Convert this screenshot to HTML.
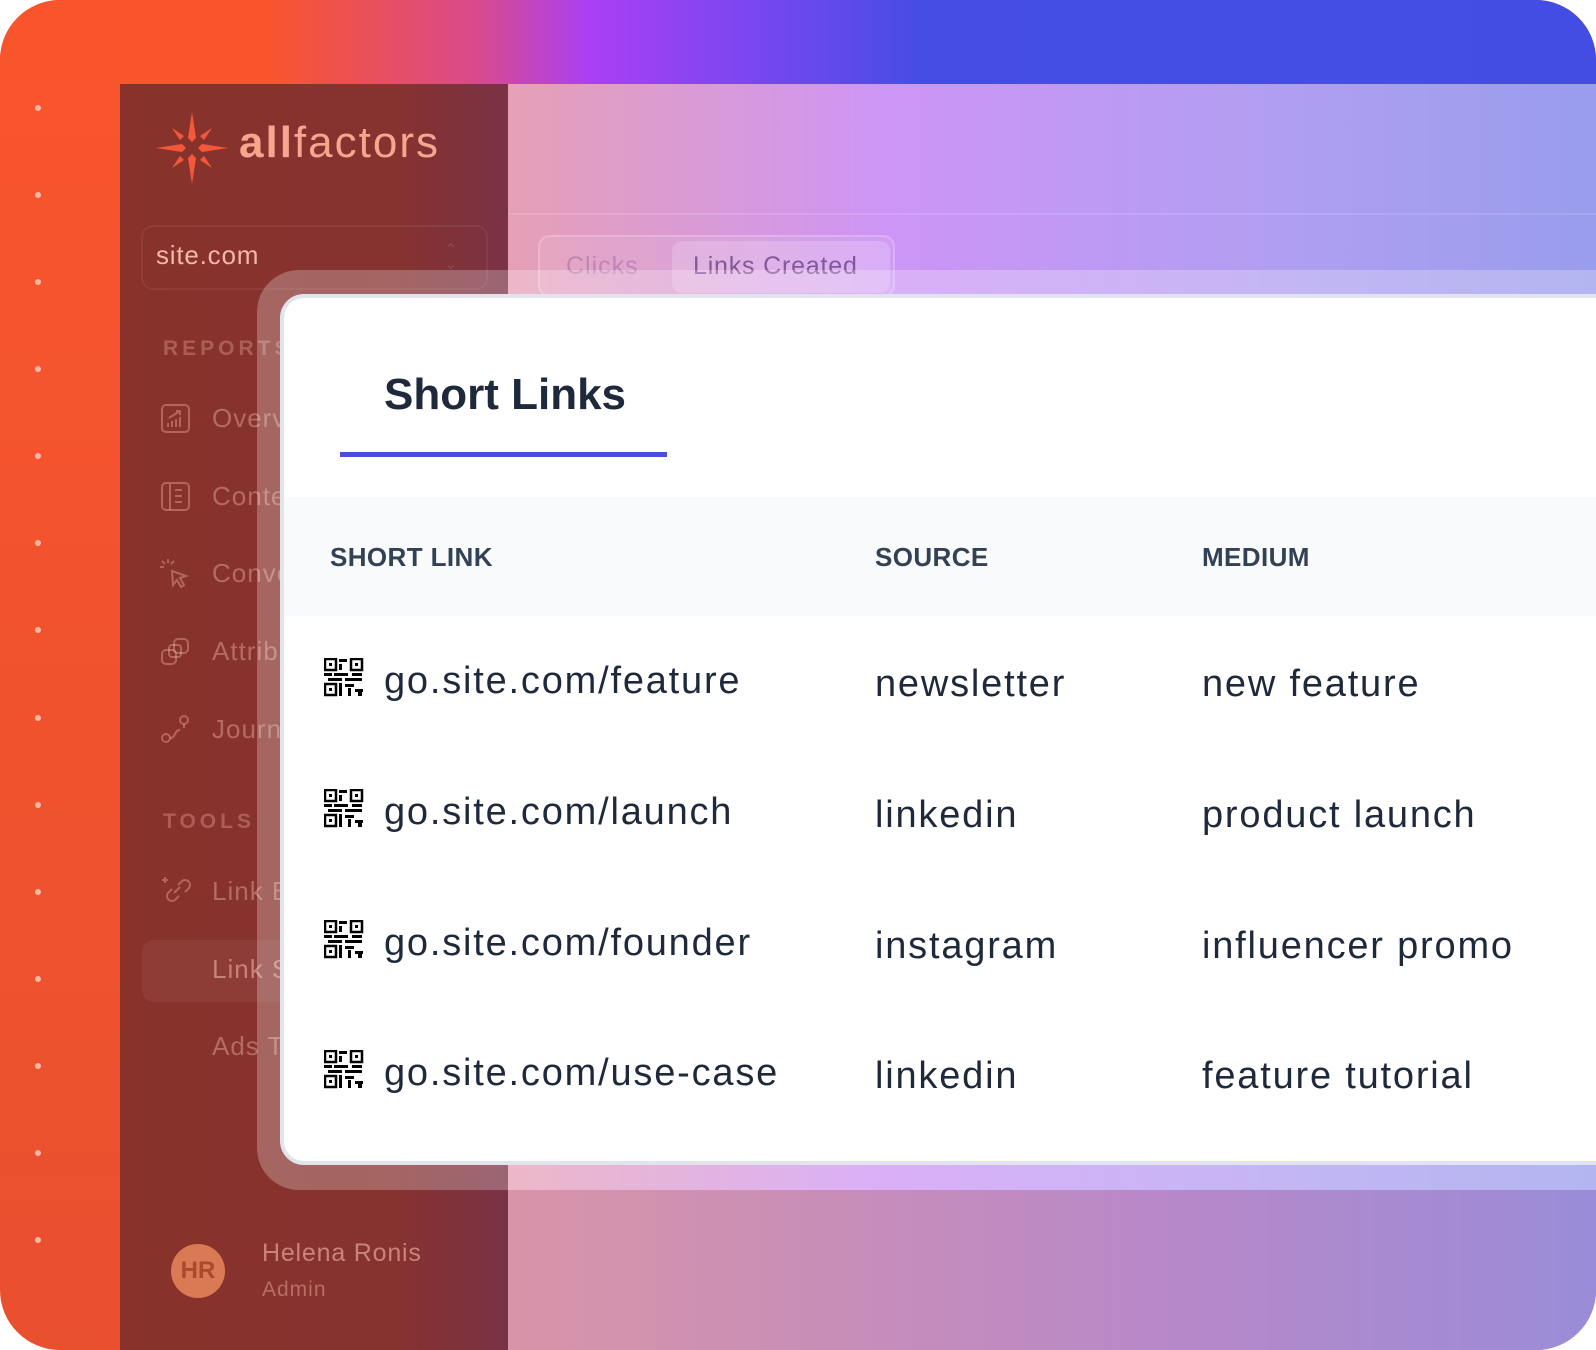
<!DOCTYPE html>
<html><head><meta charset="utf-8"><style>
*{margin:0;padding:0;box-sizing:border-box}
body{width:1596px;height:1350px;overflow:hidden;background:#fff;font-family:"Liberation Sans",sans-serif}
.outer{position:absolute;left:0;top:0;width:1596px;height:1350px;border-radius:60px;overflow:hidden;background:linear-gradient(180deg,#f9552d,#e9502f)}
.top{position:absolute;left:0;top:0;width:1596px;height:84px;background:linear-gradient(90deg,#f9552d 0%,#f9552d 17%,#d84a8e 30%,#aa3ff5 37%,#7a47f0 47%,#454de4 58%,#434de4 100%)}
.dot{position:absolute;left:35px;width:6px;height:6px;border-radius:3px;background:#fbb8a4}
.side{position:absolute;left:120px;top:84px;width:388px;height:1266px;background:linear-gradient(90deg,#88322b 0%,#86322f 70%,#7a3245 100%)}
.main{position:absolute;left:508px;top:84px;width:1088px;height:1266px;background:linear-gradient(90deg,#e6a0b6 0%,#cd95f6 35%,#b19ef2 70%,#999dec 100%)}
.mainbot{position:absolute;left:508px;top:1190px;width:1088px;height:160px;background:linear-gradient(90deg,#d894a8,#b888c8 60%,#9a8cd8)}
.band{position:absolute;left:508px;top:213px;width:1088px;height:2px;background:rgba(255,255,255,.12)}
.sl{position:absolute;color:rgba(255,200,185,.38);font-size:26px;letter-spacing:1px}
.hd{position:absolute;color:rgba(255,200,185,.3);font-size:21px;letter-spacing:4px;font-weight:bold}
.frame{position:absolute;left:257px;top:270px;width:1400px;height:920px;border-radius:42px;background:rgba(255,255,255,.25)}
.card{position:absolute;left:280px;top:294px;width:1400px;height:871px;border-radius:24px;background:#fff;border:4px solid #e2e4ec}
.t{position:absolute;color:#1e293b;font-size:38px;letter-spacing:1.8px}
.th{position:absolute;color:#334155;font-size:26px;font-weight:bold;top:542px;letter-spacing:.4px}
.qr{position:absolute;left:324px;width:40px;height:40px}
</style></head><body>
<div class="outer">
<div class="top"></div>
<div class="dot" style="top:105px"></div><div class="dot" style="top:192px"></div><div class="dot" style="top:279px"></div><div class="dot" style="top:366px"></div><div class="dot" style="top:453px"></div><div class="dot" style="top:540px"></div><div class="dot" style="top:627px"></div><div class="dot" style="top:715px"></div><div class="dot" style="top:802px"></div><div class="dot" style="top:889px"></div><div class="dot" style="top:976px"></div><div class="dot" style="top:1063px"></div><div class="dot" style="top:1150px"></div><div class="dot" style="top:1237px"></div>
<div class="side"></div>
<div class="main"></div>
<div class="mainbot"></div>
<div class="band"></div>
<svg style="position:absolute;left:154px;top:110px" width="76" height="76" viewBox="0 0 76 76"><g fill="#f5573a"><path d="M38 2 L42 28 L38 32 L34 28Z"/><path d="M38 74 L42 48 L38 44 L34 48Z"/><path d="M2 38 L28 34 L32 38 L28 42Z"/><path d="M74 38 L48 34 L44 38 L48 42Z"/><path d="M18 18 L30 26 L26 30Z"/><path d="M58 18 L50 30 L46 26Z"/><path d="M18 58 L26 46 L30 50Z"/><path d="M58 58 L46 50 L50 46Z"/></g></svg>
<div style="position:absolute;left:239px;top:118px;font-size:44px;color:#f6a68e;letter-spacing:2px"><b>all</b>factors</div>
<div style="position:absolute;left:141px;top:225px;width:347px;height:65px;border:2px solid rgba(255,255,255,.06);border-radius:12px"></div>
<div style="position:absolute;left:156px;top:240px;font-size:26px;color:#f5b8a6;letter-spacing:.8px">site.com</div>
<div style="position:absolute;left:444px;top:244px;color:rgba(255,255,255,.12);font-size:16px;line-height:14px">&#8963;<br>&#8964;</div>
<div class="hd" style="left:163px;top:337px">REPORTS</div>
<div class="hd" style="left:163px;top:810px">TOOLS</div>
<svg style="position:absolute;left:160px;top:403px" width="32" height="32" viewBox="0 0 32 32" fill="none" stroke="rgba(255,200,185,.35)" stroke-width="2"><rect x="2" y="2" width="27" height="27" rx="4"/><path d="M8 24v-4M12 24v-6M16 24v-8M20 24v-10M9 15 L20 8 M16 8h4v4"/></svg>
<svg style="position:absolute;left:160px;top:481px" width="32" height="32" viewBox="0 0 32 32" fill="none" stroke="rgba(255,200,185,.35)" stroke-width="2"><rect x="2" y="2" width="27" height="27" rx="4"/><path d="M10 3v26M15 9h7M15 15h7M15 21h7"/></svg>
<svg style="position:absolute;left:158px;top:557px" width="34" height="34" viewBox="0 0 34 34" fill="none" stroke="rgba(255,200,185,.35)" stroke-width="2"><path d="M14 14 L28 19 L22 21 L26 28 L23 30 L19 23 L15 28Z M10 2v4M2 10h4M4 4l3 3M16 4l-3 3"/></svg>
<svg style="position:absolute;left:160px;top:636px" width="32" height="32" viewBox="0 0 32 32" fill="none" stroke="rgba(255,200,185,.35)" stroke-width="2"><rect x="2" y="14" width="14" height="14" rx="4"/><rect x="14" y="3" width="14" height="14" rx="4"/><rect x="9" y="9" width="12" height="12" rx="3"/></svg>
<svg style="position:absolute;left:160px;top:713px" width="32" height="32" viewBox="0 0 32 32" fill="none" stroke="rgba(255,200,185,.35)" stroke-width="2"><circle cx="6" cy="25" r="4"/><circle cx="24" cy="7" r="4"/><path d="M10 25c6 0 4-8 10-8 M24 11v4"/></svg>
<svg style="position:absolute;left:160px;top:875px" width="32" height="32" viewBox="0 0 32 32" fill="none" stroke="rgba(255,200,185,.35)" stroke-width="2"><path d="M14 18 L20 12 M12 14 L8 18a5 5 0 0 0 7 7l4-4 M18 10l4-4a5 5 0 0 1 7 7l-4 4 M5 2v6M2 5h6"/></svg>
<div class="sl" style="left:212px;top:403px">Overview</div>
<div class="sl" style="left:212px;top:481px">Content</div>
<div class="sl" style="left:212px;top:558px">Conversions</div>
<div class="sl" style="left:212px;top:636px">Attribution</div>
<div class="sl" style="left:212px;top:714px">Journeys</div>
<div class="sl" style="left:212px;top:876px">Link Builder</div>
<div style="position:absolute;left:142px;top:940px;width:300px;height:62px;border-radius:12px;background:rgba(255,255,255,.05)"></div>
<div class="sl" style="left:212px;top:954px;color:rgba(255,200,185,.5)">Link Shortener</div>
<div class="sl" style="left:212px;top:1031px">Ads Tracking</div>
<div style="position:absolute;left:171px;top:1244px;width:54px;height:54px;border-radius:27px;background:#d97a55;color:#a94a2f;font-size:24px;font-weight:bold;text-align:center;line-height:54px">HR</div>
<div style="position:absolute;left:262px;top:1239px;font-size:25px;color:rgba(255,200,185,.55);letter-spacing:.8px">Helena Ronis</div>
<div style="position:absolute;left:262px;top:1278px;font-size:21px;color:rgba(255,200,185,.4);letter-spacing:1px">Admin</div>
<div style="position:absolute;left:538px;top:235px;width:357px;height:62px;border:2px solid rgba(255,255,255,.2);border-radius:12px;background:rgba(255,255,255,.08)"></div>
<div style="position:absolute;left:672px;top:241px;width:218px;height:52px;border-radius:10px;background:rgba(255,255,255,.18)"></div>
<div style="position:absolute;left:566px;top:252px;font-size:25px;color:rgba(120,80,140,.35);letter-spacing:1px">Clicks</div>
<div style="position:absolute;left:693px;top:252px;font-size:25px;color:rgba(90,50,120,.7);letter-spacing:.8px">Links Created</div>
<div class="frame"></div>
<div class="card"></div>
<div style="position:absolute;left:384px;top:370px;font-size:44px;font-weight:bold;color:#1e293b">Short Links</div>
<div style="position:absolute;left:340px;top:452px;width:327px;height:5px;background:#4a4fdb"></div>
<div style="position:absolute;left:284px;top:497px;width:1312px;height:119px;background:#f8fafc"></div>
<div class="th" style="left:330px">SHORT LINK</div>
<div class="th" style="left:875px">SOURCE</div>
<div class="th" style="left:1202px">MEDIUM</div>
<svg width="0" height="0" style="position:absolute"><defs><g id="q"><rect x="1" y="1" width="11" height="11" fill="none" stroke="#000" stroke-width="2.5"/><rect x="5" y="5" width="3" height="3"/><rect x="27" y="1" width="11" height="11" fill="none" stroke="#000" stroke-width="2.5"/><rect x="31" y="5" width="3" height="3"/><rect x="1" y="26" width="11" height="11" fill="none" stroke="#000" stroke-width="2.5"/><rect x="5" y="30" width="3" height="3"/><rect x="15" y="1" width="8" height="3"/><rect x="15" y="6" width="3" height="6"/><rect x="0" y="15" width="8" height="3"/><rect x="10" y="15" width="14" height="3"/><rect x="4" y="20" width="14" height="3"/><rect x="21" y="20" width="17" height="3"/><rect x="28" y="15" width="10" height="3"/><rect x="15" y="25" width="3" height="13"/><rect x="21" y="26" width="9" height="3"/><rect x="24" y="30" width="3" height="8"/><rect x="31" y="31" width="8" height="3"/><rect x="34" y="34" width="4" height="4"/></g></defs></svg>
<svg class="qr" style="top:658px" viewBox="0 0 40 40"><use href="#q"/></svg>
<svg class="qr" style="top:789px" viewBox="0 0 40 40"><use href="#q"/></svg>
<svg class="qr" style="top:920px" viewBox="0 0 40 40"><use href="#q"/></svg>
<svg class="qr" style="top:1050px" viewBox="0 0 40 40"><use href="#q"/></svg>
<div class="t" style="left:384px;top:660px">go.site.com/feature</div>
<div class="t" style="left:875px;top:663px">newsletter</div>
<div class="t" style="left:1202px;top:663px">new feature</div>
<div class="t" style="left:384px;top:791px">go.site.com/launch</div>
<div class="t" style="left:875px;top:794px">linkedin</div>
<div class="t" style="left:1202px;top:794px">product launch</div>
<div class="t" style="left:384px;top:922px">go.site.com/founder</div>
<div class="t" style="left:875px;top:925px">instagram</div>
<div class="t" style="left:1202px;top:925px">influencer promo</div>
<div class="t" style="left:384px;top:1052px">go.site.com/use-case</div>
<div class="t" style="left:875px;top:1055px">linkedin</div>
<div class="t" style="left:1202px;top:1055px">feature tutorial</div>
</div>
</body></html>
